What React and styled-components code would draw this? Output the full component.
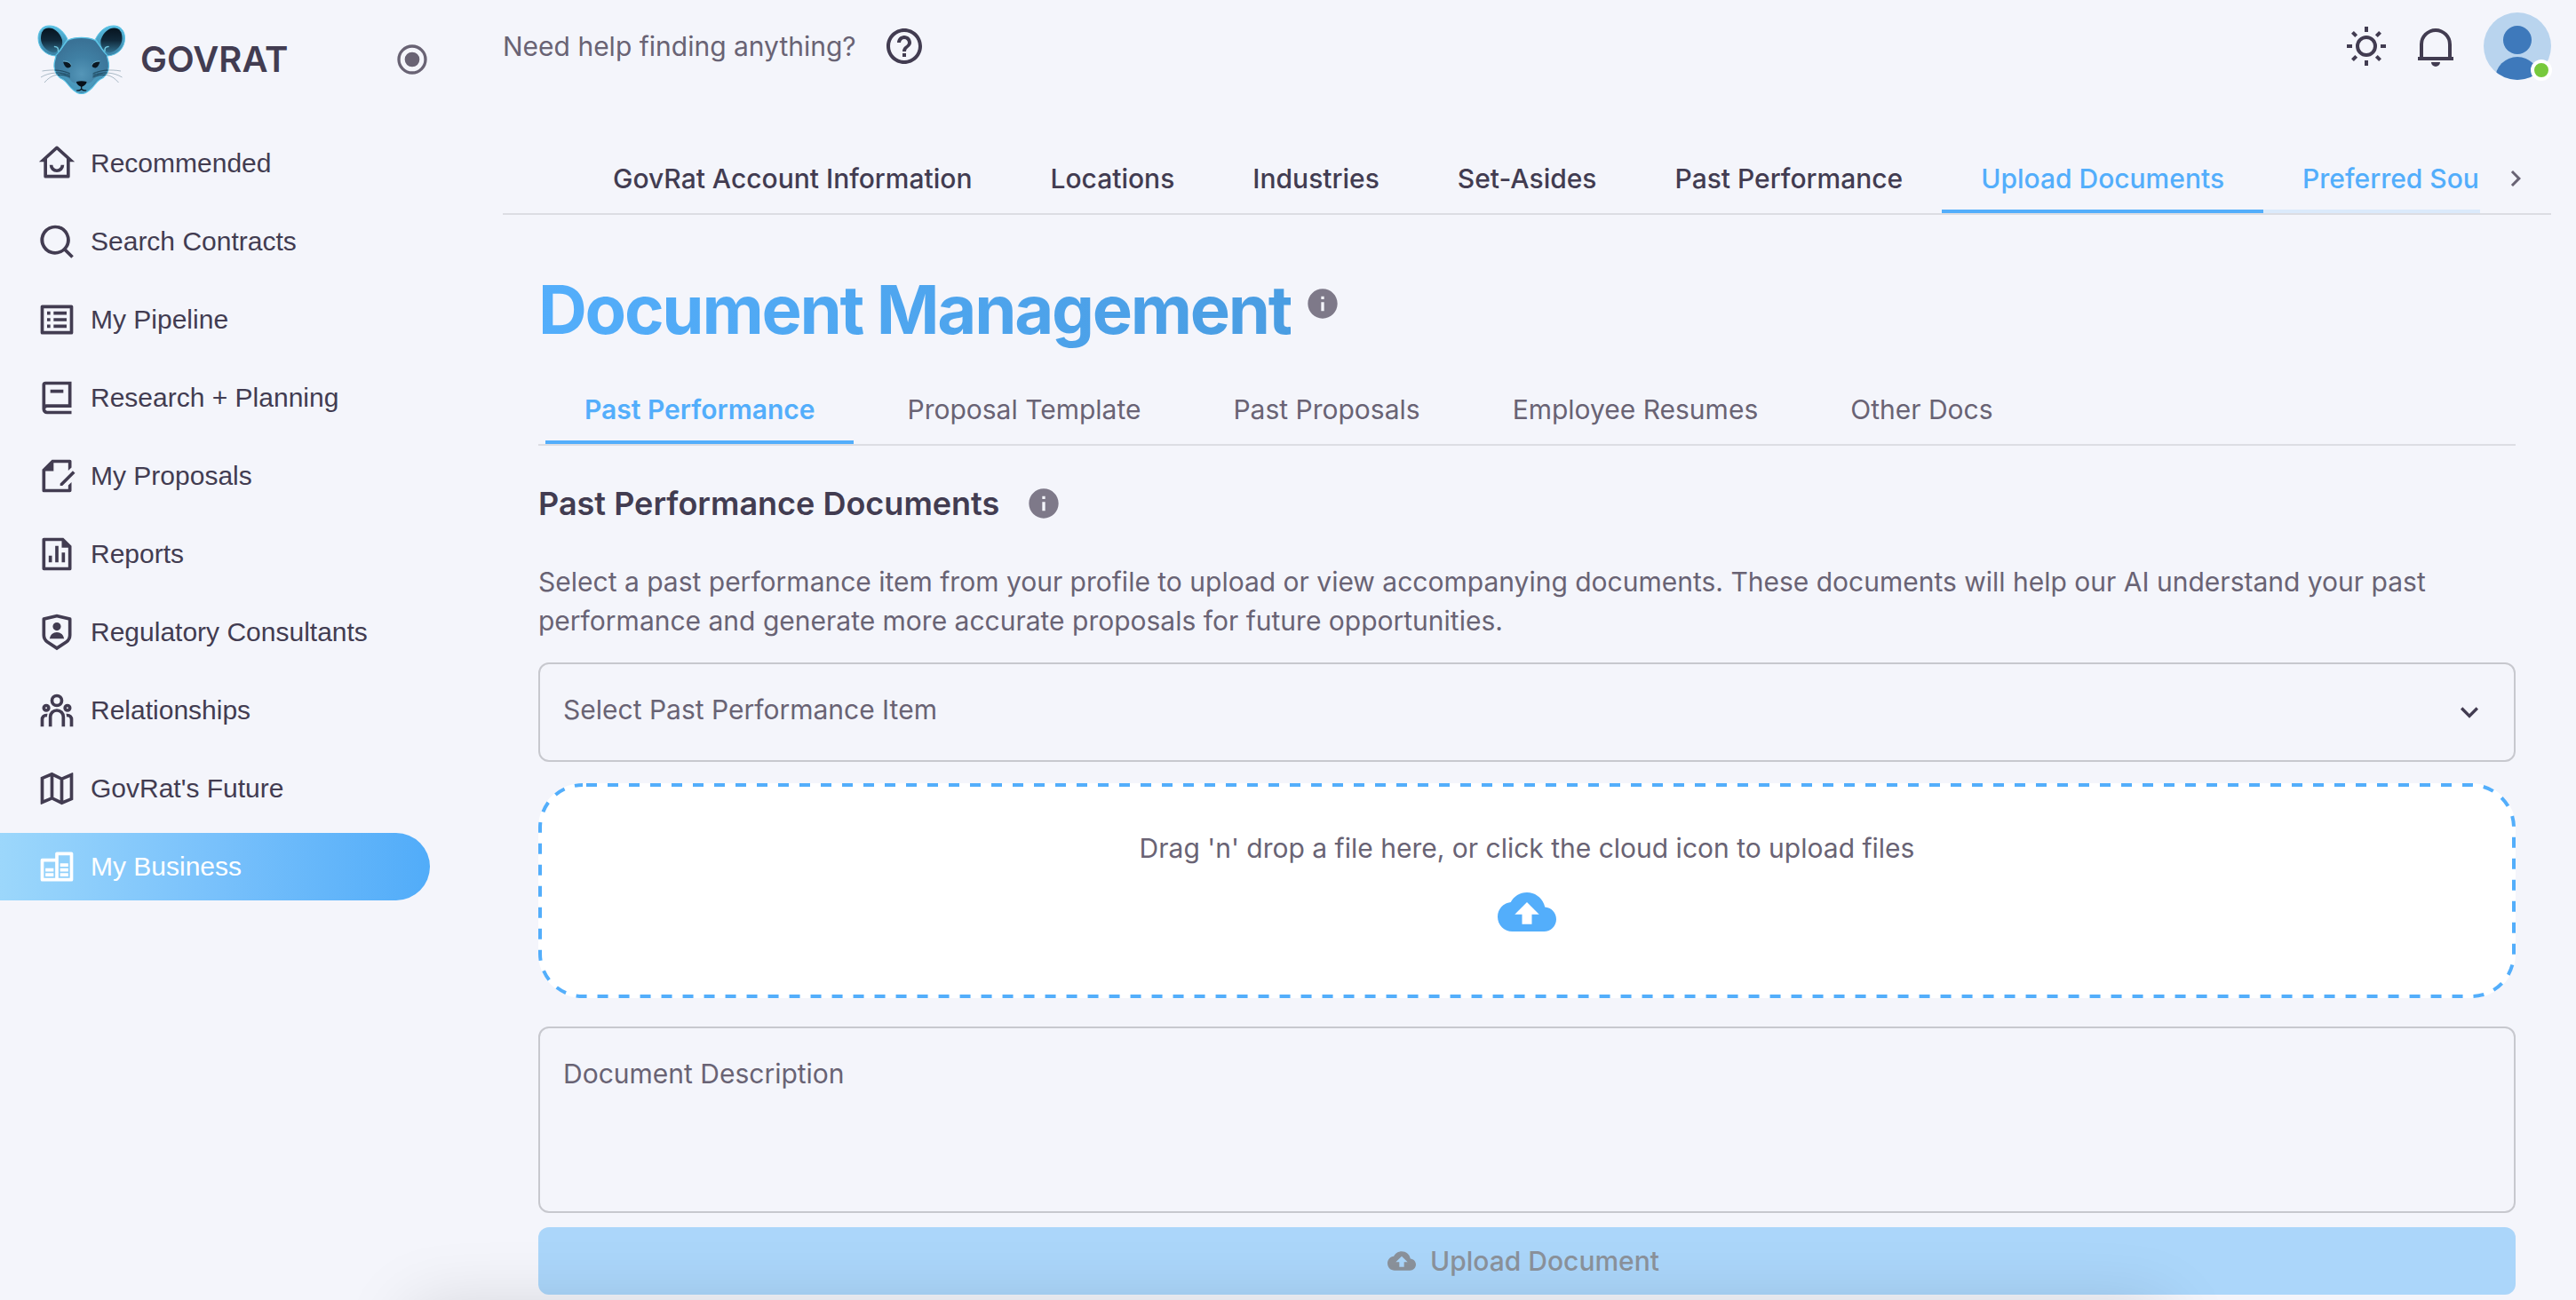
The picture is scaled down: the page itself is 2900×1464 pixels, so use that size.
import React from "react";
import styled, { createGlobalStyle } from "styled-components";

const ink = "#423c51";
const muted = "#696374";
const blue = "#53aefb";
const line = "#dcdde3";
const fieldLine = "#c7c8ce";

const GlobalStyle = createGlobalStyle`
  *, *::before, *::after { box-sizing: border-box; }
  body {
    margin: 0;
    background: #f4f5fb;
    color: ${ink};
    font-family: Inter, "Liberation Sans", sans-serif;
    font-size: 30px;
    line-height: 44px;
    -webkit-font-smoothing: antialiased;
  }
  button, input, select, textarea { font: inherit; color: inherit; }
  h1, h2, p, ul { margin: 0; padding: 0; }
`;

const Shell = styled.div`
  display: flex;
  align-items: flex-start;
`;

const Sidebar = styled.aside`
  flex: 0 0 520px;
`;

const Brand = styled.div`
  display: flex;
  align-items: center;
  height: 134px;
  padding: 0 36px 0 42px;
`;

const BrandName = styled.span`
  flex: 1;
  margin-left: 16px;
  font-size: 40px;
  font-weight: 600;
`;

const IconButton = styled.button`
  display: flex;
  padding: 0;
  border: 0;
  background: none;
  color: ${(p) => (p.$muted ? muted : ink)};
  cursor: pointer;
`;

const NavList = styled.ul`
  display: flex;
  flex-direction: column;
  gap: 12px;
  padding: 12px 36px 0 0;
  list-style: none;
`;

const NavLink = styled.a`
  display: flex;
  align-items: center;
  gap: 16px;
  height: 76px;
  padding-left: 42px;
  border-radius: 0 38px 38px 0;
  font-family: "Liberation Sans", Arial, sans-serif;
  text-decoration: none;
  color: ${(p) => (p.$active ? "#fff" : ink)};
  background: ${(p) => (p.$active ? `linear-gradient(90deg, #9cd7fb, #77c0fb 52%, #51acf9)` : "none")};
`;

const Main = styled.main`
  flex: 1;
  min-width: 0;
  padding: 0 28px 6px 46px;
`;

const TopBar = styled.header`
  display: flex;
  align-items: center;
  gap: 30px;
  height: 104px;
  color: ${muted};
`;

const Spacer = styled.div`
  flex: 1;
`;

const AvatarButton = styled(IconButton)`
  position: relative;
`;

const OnlineDot = styled.span`
  position: absolute;
  right: -1px;
  bottom: -1px;
  width: 24px;
  height: 24px;
  border: 4px solid #fff;
  border-radius: 50%;
  background: #77c93c;
`;

const TabBar = styled.nav`
  display: flex;
  margin-top: 58px;
  padding-left: 80px;
  border-bottom: 2px solid ${line};
`;

const TabScroller = styled.div`
  display: flex;
  flex: 1;
  min-width: 0;
  overflow: hidden;
`;

const Tab = styled.button`
  flex: none;
  height: 78px;
  padding: 4px 44px 0;
  border: 0;
  border-bottom: 4px solid ${(p) => (p.$state === "active" ? blue : p.$state === "next" ? "#dbeafb" : "transparent")};
  background: none;
  font-weight: 500;
  white-space: nowrap;
  color: ${(p) => (p.$state ? blue : ink)};
  cursor: pointer;
`;

const ScrollButton = styled(IconButton)`
  flex: 0 0 80px;
  align-items: center;
  justify-content: center;
`;

const Content = styled.section`
  display: flex;
  flex-direction: column;
  padding: 58px 40px 0;
`;

const TitleRow = styled.div`
  display: flex;
  align-items: flex-start;
  gap: 16px;
  height: 122px;
  color: #7e7989;
  svg { margin-top: 22px; }
`;

const Title = styled.h1`
  font-size: 76px;
  line-height: 96px;
  font-weight: 700;
  letter-spacing: -0.03em;
  color: transparent;
  background: linear-gradient(90deg, #53aefb, #4a9de2);
  background-clip: text;
`;

const SubTabBar = styled.nav`
  display: flex;
  gap: 16px;
  padding-left: 8px;
  border-bottom: 2px solid ${line};
`;

const SubTab = styled(Tab)`
  font-weight: ${(p) => (p.$state ? 600 : 400)};
  color: ${(p) => (p.$state ? blue : muted)};
`;

const HeadingRow = styled.div`
  display: flex;
  align-items: center;
  gap: 30px;
  margin-top: 41px;
  color: #7e7989;
`;

const Heading = styled.h2`
  font-size: 36px;
  line-height: 48px;
  font-weight: 600;
  color: ${ink};
`;

const Description = styled.p`
  margin: 42px 0 25px;
  color: ${muted};
`;

const HiddenLabel = styled.span`
  position: absolute;
  width: 1px;
  height: 1px;
  overflow: hidden;
  clip-path: inset(50%);
`;

const SelectField = styled.label`
  display: grid;
  align-items: center;
  & > * { grid-area: 1 / 1; }
  svg { justify-self: end; margin-right: 32px; pointer-events: none; }
`;

const Select = styled.select`
  width: 100%;
  height: 112px;
  padding: 0 80px 6px 26px;
  border: 2px solid ${fieldLine};
  border-radius: 12px;
  background: transparent;
  color: ${muted};
  appearance: none;
`;

const DropZone = styled.label`
  position: relative;
  display: flex;
  flex-direction: column;
  align-items: center;
  gap: 17px;
  height: 242px;
  margin-top: 24px;
  padding-top: 51px;
  border-radius: 50px;
  background: #fff;
  color: ${muted};
  cursor: pointer;
`;

const DashedOutline = styled.svg`
  position: absolute;
  inset: 0;
  width: 100%;
  height: 100%;
  rect {
    width: calc(100% - 4px);
    height: calc(100% - 4px);
    fill: none;
    stroke: ${blue};
    stroke-width: 4px;
    stroke-dasharray: 12 12;
    stroke-dashoffset: -4px;
  }
`;

const FileInput = styled.input`
  position: absolute;
  width: 1px;
  height: 1px;
  opacity: 0;
`;

const TextArea = styled.textarea`
  display: block;
  width: 100%;
  height: 210px;
  margin-top: 32px;
  padding: 29px 26px;
  border: 2px solid ${fieldLine};
  border-radius: 12px;
  background: transparent;
  resize: none;
  &::placeholder { color: ${muted}; opacity: 1; }
`;

const SubmitButton = styled.button`
  display: flex;
  align-items: center;
  justify-content: center;
  gap: 16px;
  height: 76px;
  margin-top: 16px;
  border: 0;
  border-radius: 12px;
  background: #abd6fa;
  font-weight: 500;
  color: #8b929b;
  svg { margin-left: -8px; }
`;

const BottomShadow = styled.div`
  position: fixed;
  left: 16%;
  right: 16%;
  bottom: -210px;
  height: 200px;
  box-shadow: 0 0 80px rgba(0, 0, 0, 0.15);
  pointer-events: none;
`;

function Icon({ d, size = 44, color }) {
  return (
    <svg width={size} height={size} viewBox="0 0 24 24" fill={color || "currentColor"} aria-hidden="true">
      <path fillRule="evenodd" d={d} />
    </svg>
  );
}

const icons = {
  home: "M6 19h12V9.158l-6-5.455-6 5.455V19zm13 2H5a1 1 0 0 1-1-1v-9H1l10.327-9.388a1 1 0 0 1 1.346 0L23 11h-3v9a1 1 0 0 1-1 1zM7.5 13h2a2.5 2.5 0 1 0 5 0h2a4.5 4.5 0 1 1-9 0z",
  search: "M11 2a9 9 0 0 1 7.03 14.62l4.25 4.26-1.41 1.41-4.33-4.33A9 9 0 1 1 11 2zm0 2a7 7 0 1 0 0 14 7 7 0 0 0 0-14z",
  list: "M3 3h18a1 1 0 0 1 1 1v16a1 1 0 0 1-1 1H3a1 1 0 0 1-1-1V4a1 1 0 0 1 1-1zm1 2v14h16V5H4zm2 2h2v2H6V7zm4 0h8v2h-8V7zm-4 4h2v2H6v-2zm4 0h8v2h-8v-2zm-4 4h2v2H6v-2zm4 0h8v2h-8v-2z",
  book: "M21 18H6a1 1 0 0 0 0 2h15v2H6a3 3 0 0 1-3-3V4a2 2 0 0 1 2-2h16v16zM5 16.05c.162-.033.329-.05.5-.05H19V4H5v12.05zM16 9H8V7h8v2z",
  edit: "M21 6.757l-2 2V4h-9v5H5v11h14v-2.243l2-2v5.25a.993.993 0 0 1-.999.993H3.994A1 1 0 0 1 3 20.993V8l6.003-6h10.995C20.55 2 21 2.455 21 2.992v3.765zm.778 2.05l1.414 1.415L15.414 18l-1.416-.002.002-1.412 7.778-7.778z",
  chart: "M11 7h2v10h-2V7zm4 4h2v6h-2v-6zm-8 2h2v4H7v-4zm8-9H5v16h14V8h-4V4zM3 2.992C3 2.444 3.447 2 3.999 2H16l5 5v13.993A1 1 0 0 1 20.007 22H3.993A1 1 0 0 1 3 21.008V2.992z",
  shield: "M3.783 2.826L12 1l8.217 1.826a1 1 0 0 1 .783.976v9.987a6 6 0 0 1-2.672 4.992L12 23l-6.328-4.219A6 6 0 0 1 3 13.79V3.802a1 1 0 0 1 .783-.976zM5 4.604v9.185a4 4 0 0 0 1.781 3.328L12 20.597l5.219-3.48A4 4 0 0 0 19 13.79V4.604L12 3.05 5 4.604zM12 11a2.5 2.5 0 1 1 0-5 2.5 2.5 0 0 1 0 5zm-4.473 5a4.5 4.5 0 0 1 8.946 0H7.527z",
  team: "M12 11a5 5 0 0 1 5 5v6h-2v-6a3 3 0 0 0-2.824-2.995L12 13a3 3 0 0 0-2.995 2.824L9 16v6H7v-6a5 5 0 0 1 5-5zm-6.5 3c.279 0 .55.033.81.094a5.947 5.947 0 0 0-.301 1.575L6 16v.086a1.492 1.492 0 0 0-.356-.08L5.5 16a1.5 1.5 0 0 0-1.493 1.356L4 17.5V22H2v-4.5A3.5 3.5 0 0 1 5.5 14zm13 0a3.5 3.5 0 0 1 3.5 3.5V22h-2v-4.5a1.5 1.5 0 0 0-1.356-1.493L18.5 16c-.175 0-.343.03-.5.085V16c0-.666-.108-1.306-.309-1.904.259-.063.53-.096.809-.096zm-13-6a2.5 2.5 0 1 1 0 5 2.5 2.5 0 0 1 0-5zm13 0a2.5 2.5 0 1 1 0 5 2.5 2.5 0 0 1 0-5zm-13 2a.5.5 0 1 0 0 1 .5.5 0 0 0 0-1zm13 0a.5.5 0 1 0 0 1 .5.5 0 0 0 0-1zM12 2a4 4 0 1 1 0 8 4 4 0 0 1 0-8zm0 2a2 2 0 1 0 0 4 2 2 0 0 0 0-4z",
  map: "M2 5l7-3 6 3 6.303-2.701a.5.5 0 0 1 .697.46V19l-7 3-6-3-6.303 2.701a.5.5 0 0 1-.697-.46V5zm14 14.395l4-1.714V5.033l-4 1.714v12.648zm-2-.131V6.736l-4-2v12.528l4 2zm-6-2.011V4.605L4 6.319v12.648l4-1.714z",
  building: "M3 7h8V4a1 1 0 0 1 1-1h9a1 1 0 0 1 1 1v16a1 1 0 0 1-1 1H3a1 1 0 0 1-1-1V8a1 1 0 0 1 1-1zm1 2v10h7V9H4zm9-4v14h7V5h-7zM5 13h5v2H5v-2zm0 3h5v2H5v-2zm9-6h5v2h-5v-2zm0 3h5v2h-5v-2zm0 3h5v2h-5v-2z",
  radio: "M12 2a10 10 0 1 0 0 20 10 10 0 0 0 0-20zm0 2a8 8 0 1 1 0 16 8 8 0 0 1 0-16zm0 3a5 5 0 1 0 0 10 5 5 0 0 0 0-10z",
  help: "M11 18h2v-2h-2v2zm1-16C6.48 2 2 6.48 2 12s4.48 10 10 10 10-4.48 10-10S17.52 2 12 2zm0 18c-4.41 0-8-3.59-8-8s3.59-8 8-8 8 3.59 8 8-3.59 8-8 8zm0-14c-2.21 0-4 1.79-4 4h2c0-1.1.9-2 2-2s2 .9 2 2c0 2-3 1.75-3 5h2c0-2.25 3-2.5 3-5 0-2.21-1.79-4-4-4z",
  sun: "M12 18a6 6 0 1 1 0-12 6 6 0 0 1 0 12zm0-2a4 4 0 1 0 0-8 4 4 0 0 0 0 8zM11 1h2v3h-2V1zm0 19h2v3h-2v-3zM3.515 4.929l1.414-1.414L7.05 5.636 5.636 7.05 3.515 4.93zM16.95 18.364l1.414-1.414 2.121 2.121-1.414 1.414-2.121-2.121zm2.121-14.85l1.414 1.415-2.121 2.121-1.414-1.414 2.121-2.121zM5.636 16.95l1.414 1.414-2.121 2.121-1.414-1.414 2.121-2.121zM23 11v2h-3v-2h3zM4 11v2H1v-2h3z",
  bell: "M3 18v-7a9 9 0 0 1 18 0v7h1v2H2v-2h1zm2 0h14v-7a7 7 0 0 0-14 0v7zM9.5 21h5a2.5 2.5 0 0 1-5 0z",
  right: "M8.59 16.59 13.17 12 8.59 7.41 10 6l6 6-6 6z",
  down: "M7.41 8.59 12 13.17l4.59-4.58L18 10l-6 6-6-6z",
  info: "M12 2C6.48 2 2 6.48 2 12s4.48 10 10 10 10-4.48 10-10S17.52 2 12 2zm1 15h-2v-6h2v6zm0-8h-2V7h2v2z",
  cloud: "M19.35 10.04C18.67 6.59 15.64 4 12 4 9.11 4 6.6 5.64 5.35 8.04 2.34 8.36 0 10.91 0 14c0 3.31 2.69 6 6 6h13c2.76 0 5-2.24 5-5 0-2.64-2.05-4.78-4.65-4.96zM14 13v4h-4v-4H7l5-5 5 5h-3z",
};

function LogoSide() {
  return (
    <>
      <path d="M34 17C29 7 22 2 13.500 2 5.500 2 1 8 1 16c0 11 8 19.500 20 20z" fill="url(#rim)" stroke="#5cc4e6" strokeWidth="1" />
      <path d="M28 18C25 9 19 4.500 13 4.500 7 4.500 4 9 4 16c0 8 6 14.500 14 16.500 7-1 11-7 10-14.500z" fill="url(#ear)" />
    </>
  );
}

function LogoFace() {
  return (
    <>
      <path d="M19.500 25.500q4.500 0 4 5" fill="none" stroke="#70c7df" strokeWidth="1.500" strokeLinecap="round" />
      <path d="M29 42.500c4 0 8 1 9 4 0 2-2 3-4 3-3-1-4-4-5-7z" fill="#0b1721" />
      <path d="M29 42c4-.5 8 1 9 4.500" fill="none" stroke="#76b7cf" strokeWidth="0.800" />
      <g fill="none" stroke="#1f4a61" strokeWidth="0.700">
        <path d="M36 55C28 52 17 51 5.500 53M36 57C25 54 14 54 4 60M37 59.500C27 55 16 56 8 66" opacity="0.500" />
        <path d="M37 56C32 54 26 52 20 52M37 58C31 56 26 55 21 55M37 60C32 58 28 57 23 57.500" strokeWidth="1" />
      </g>
    </>
  );
}

function MouseLogo() {
  return (
    <svg width="100" height="80" viewBox="0 0 100 80" aria-hidden="true">
      <defs>
        <linearGradient id="ear" x1="0" y1="0" x2="0" y2="1">
          <stop offset="0" stopColor="#07141f" />
          <stop offset="0.5" stopColor="#10293a" />
          <stop offset="1" stopColor="#32708f" />
        </linearGradient>
        <linearGradient id="rim" x1="0" y1="0" x2="0" y2="1">
          <stop offset="0" stopColor="#58bfe2" />
          <stop offset="1" stopColor="#3a80a4" />
        </linearGradient>
        <radialGradient id="face" cx="0.5" cy="0.65" r="0.6">
          <stop offset="0" stopColor="#5596b8" />
          <stop offset="0.5" stopColor="#4080a4" />
          <stop offset="1" stopColor="#3a7296" />
        </radialGradient>
      </defs>
      <LogoSide />
      <g transform="translate(99.500 0) scale(-1 1)"><LogoSide /></g>
      <path d="M49.700 15.300C43 15.300 38 16.500 34 18.500C29 24 27 30 21 35C21 39 18.500 42 19 48C19.500 54 23 60 29 62.500C33 65 34 68 38 72C42 76 45 78.500 49.700 78.500S57.500 76 61.500 72C65.500 68 66.500 65 70.500 62.500C76.500 60 80 54 80.500 48C81 42 78.500 39 78.500 35C72.500 30 70.500 24 65.500 18.500C61.500 16.500 56.500 15.300 49.700 15.300Z" fill="url(#face)" stroke="#59c2e5" strokeWidth="1.200" />
      <path d="M20 52C25 62 32 61 37 69C41 75 45 77.500 49.700 77.500S58.500 75 62.500 69C67.500 61 74.500 62 79.500 52C73 58 66 58 62 64C58 69 42 69 38 64C34 58 27 58 20 52Z" fill="#53b1d5" opacity="0.450" />
      <LogoFace />
      <g transform="translate(99.500 0) scale(-1 1)"><LogoFace /></g>
      <path d="M44 65q5.700-1.500 11.500 0c0 3-3.500 5-5.700 5.800C47.500 70 44 68 44 65z" fill="#071019" />
      <path d="M49.700 70v3.500m-5.500 1.500c2.500 0 4.500-.5 5.500-1.500 1 1 3 1.500 5.500 1.500" fill="none" stroke="#071019" strokeWidth="1.200" />
    </svg>
  );
}

function Avatar() {
  return (
    <svg width="76" height="76" viewBox="0 0 76 76" aria-hidden="true">
      <defs>
        <clipPath id="avatarClip"><circle cx="38" cy="38" r="38" /></clipPath>
      </defs>
      <g clipPath="url(#avatarClip)">
        <rect width="76" height="76" fill="#b9d4ee" />
        <circle cx="38" cy="31" r="16" fill="#3e79bb" />
        <circle cx="38" cy="75" r="25" fill="#3e79bb" />
      </g>
    </svg>
  );
}

const navItems = [
  ["home", "Recommended"],
  ["search", "Search Contracts"],
  ["list", "My Pipeline"],
  ["book", "Research + Planning"],
  ["edit", "My Proposals"],
  ["chart", "Reports"],
  ["shield", "Regulatory Consultants"],
  ["team", "Relationships"],
  ["map", "GovRat's Future"],
  ["building", "My Business"],
];

const tabs = [
  ["GovRat Account Information"],
  ["Locations"],
  ["Industries"],
  ["Set-Asides"],
  ["Past Performance"],
  ["Upload Documents", "active"],
  ["Preferred Sources", "next"],
];

const subTabs = ["Past Performance", "Proposal Template", "Past Proposals", "Employee Resumes", "Other Docs"];

export default function App() {
  return (
    <>
      <GlobalStyle />
      <Shell>
        <Sidebar>
          <Brand>
            <MouseLogo />
            <BrandName>GOVRAT</BrandName>
            <IconButton $muted aria-label="Pin menu"><Icon d={icons.radio} size={40} /></IconButton>
          </Brand>
          <nav>
            <NavList>
              {navItems.map(([icon, label]) => (
                <li key={label}>
                  <NavLink href="#" $active={label === "My Business"}>
                    <Icon d={icons[icon]} />
                    {label}
                  </NavLink>
                </li>
              ))}
            </NavList>
          </nav>
        </Sidebar>
        <Main>
          <TopBar>
            <span>Need help finding anything?</span>
            <IconButton aria-label="Help"><Icon d={icons.help} size={48} /></IconButton>
            <Spacer />
            <IconButton aria-label="Light mode"><Icon d={icons.sun} size={48} /></IconButton>
            <IconButton aria-label="Notifications"><Icon d={icons.bell} size={48} /></IconButton>
            <AvatarButton aria-label="Account"><Avatar /><OnlineDot /></AvatarButton>
          </TopBar>
          <TabBar>
            <TabScroller>
              {tabs.map(([label, state]) => (
                <Tab key={label} $state={state}>{label}</Tab>
              ))}
            </TabScroller>
            <ScrollButton aria-label="More tabs"><Icon d={icons.right} size={36} color={muted} /></ScrollButton>
          </TabBar>
          <Content>
            <TitleRow>
              <Title>Document Management</Title>
              <Icon d={icons.info} size={40} />
            </TitleRow>
            <SubTabBar>
              {subTabs.map((label, i) => (
                <SubTab key={label} $state={i === 0 ? "active" : undefined}>{label}</SubTab>
              ))}
            </SubTabBar>
            <HeadingRow>
              <Heading>Past Performance Documents</Heading>
              <Icon d={icons.info} size={40} />
            </HeadingRow>
            <Description>
              Select a past performance item from your profile to upload or view accompanying documents. These documents
              will help our AI understand your past performance and generate more accurate proposals for future
              opportunities.
            </Description>
            <SelectField>
              <Select aria-label="Select Past Performance Item" defaultValue="">
                <option value="">Select Past Performance Item</option>
              </Select>
              <Icon d={icons.down} size={40} />
            </SelectField>
            <DropZone>
              <DashedOutline aria-hidden="true"><rect x="2" y="2" rx="48" /></DashedOutline>
              <span>Drag 'n' drop a file here, or click the cloud icon to upload files</span>
              <Icon d={icons.cloud} size={66} color={blue} />
              <FileInput type="file" />
            </DropZone>
            <TextArea aria-label="Document Description" placeholder="Document Description" />
            <SubmitButton type="button" disabled>
              <Icon d={icons.cloud} size={32} />
              Upload Document
            </SubmitButton>
          </Content>
        </Main>
      </Shell>
      <BottomShadow />
    </>
  );
}
